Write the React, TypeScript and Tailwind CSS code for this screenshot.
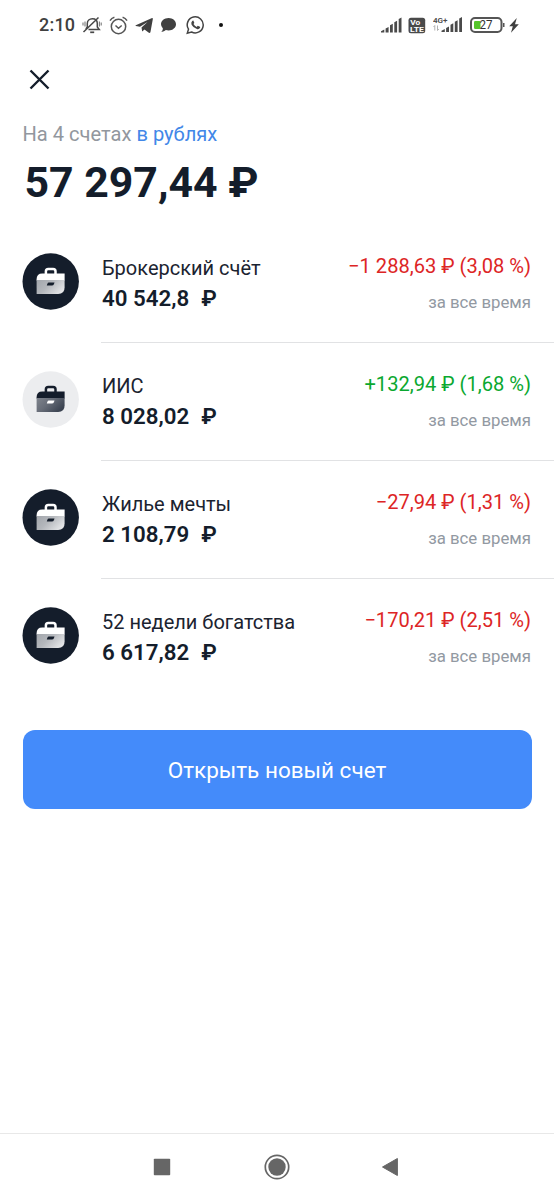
import React from "react";

type Account = {
  id: string;
  name: string;
  amount: string;
  change: string;
  positive?: boolean;
  light?: boolean;
};

const accounts: Account[] = [
  { id: "broker", name: "Брокерский счёт", amount: "40 542,8", change: "−1 288,63 ₽ (3,08 %)" },
  { id: "iis", name: "ИИС", amount: "8 028,02", change: "+132,94 ₽ (1,68 %)", positive: true, light: true },
  { id: "home", name: "Жилье мечты", amount: "2 108,79", change: "−27,94 ₽ (1,31 %)" },
  { id: "weeks", name: "52 недели богатства", amount: "6 617,82", change: "−170,21 ₽ (2,51 %)" },
];

function Briefcase({ id, light }: { id: string; light?: boolean }) {
  const top = light ? "#141d2b" : "#ffffff";
  return (
    <svg className="size-[57px] shrink-0" viewBox="0 0 57 57">
      <defs>
        <linearGradient id={id} x1="0" y1="0.1" x2="1" y2="0.6">
          <stop offset="0" stopColor={light ? "#7d828b" : "#a3a7ad"} />
          <stop offset="0.45" stopColor={light ? "#666c77" : "#b4b7bc"} />
          <stop offset="1" stopColor={light ? "#3a4250" : "#e3e4e6"} />
        </linearGradient>
      </defs>
      <circle cx="28.7" cy="28.5" r="28.2" fill={light ? "#ecedef" : "#141d2b"} />
      <path d="M23.9 21v-2.700q0-2.400 2.400-2.400h4.800q2.400 0 2.400 2.400V21" fill="none" stroke={top} strokeWidth="2.500" />
      <path d="M14.600 27.500v-1.300q0-5.700 5.700-5.700h22.300v7z" fill={top} />
      <path d="M14.600 27h28v7.400q0 6.500-6.500 6.500H14.600z" fill={`url(#${id})`} />
      <path d="M26.900 29.400h5.600l-.5 1.500q-.5 1.600-2.200 1.600h-5l.6-1.700q.4-1.400 1.500-1.400z" fill={light ? "#fff" : "#141d2b"} />
    </svg>
  );
}

function Signal() {
  return (
    <svg className="h-[17px] w-[22px]" viewBox="0 0 22 17" fill="#4a4a4a">
      <path d="M0 15.500v-1.200l3.300-1.800v3zM4.600 11.600l3-1.500v5.400h-3zM9 8.300l2.800-1.500v8.700H9zM13.300 5.300l2.800-1.500v11.700h-2.800zM17.700 2l2.800-1.500v15h-2.800z" />
    </svg>
  );
}

function StatusBar() {
  return (
    <header className="flex h-[50px] items-center pl-[39px] text-[#404040]">
      <span className="w-[43px] text-[18px] leading-[20px] font-medium tracking-[0.2px] whitespace-nowrap">2:10</span>
      <svg className="h-[18px] w-[20px]" viewBox="0 0 20 18" fill="none" stroke="#484848" strokeWidth="1.500">
        <path d="M6.500 13.600h10.800l-2-2.600V7.500c0-2.800-2-4.800-4.900-4.800S5.300 4.700 5.300 7.500V11L3.800 13M1.500 16 16.500 1.500" />
        <path d="M8.200 16.300h4" strokeWidth="1.700" />
        <path d="M3 5.600v4.800M1 6.600v2.800M17.400 5.600v4.800M19.200 6.600v2.800" strokeWidth="1.100" stroke="#777" />
      </svg>
      <svg className="ml-[7px] h-[19px] w-[20px]" viewBox="0 0 20 19" fill="none" stroke="#555" strokeWidth="1.500">
        <circle cx="9.500" cy="10.500" r="7.200" />
        <path d="m6.500 9.500 3 2.700 3.200-2.700M1 4.600Q2.500 2 5.400 1.200M13.600 1.200q2.900.8 4.400 3.400" />
      </svg>
      <svg className="ml-[6px] h-[17px] w-[19px]" viewBox="0 0 19 17" fill="#404040">
        <path d="M.800 8.200 16.500 1.200q1.600-.6 1.300 1.100L15.500 14.800q-.4 1.900-2 .8L9.500 12.400 7.200 14.600l-.7-4L12.500 5 5 9.800.900 9.100q-.9-.4-.1-.9z" />
      </svg>
      <svg className="ml-[6px] h-[16px] w-[17px]" viewBox="0 0 17 16" fill="#404040">
        <path d="M8.600 1C12.700 1 16 3.800 16 7.200s-3.300 6.200-7.400 6.200q-1.500 0-2.700-.4Q4.200 14.700 1.300 15q1.700-1.800 1.600-3.600Q1 9.600 1 7.200C1 3.800 4.400 1 8.600 1z" />
      </svg>
      <svg className="ml-[9px] h-[19px] w-[19px]" viewBox="0 0 19 19">
        <path d="m1.300 17.200 1.200-4A8 8 0 1 1 5.600 16z" fill="none" stroke="#444" strokeWidth="1.500" />
        <path d="M6.200 4.900q.6-.6 1.100-.4l1 2.300q0 .5-.8 1.200 1.200 2.100 3.200 2.900l1-1.100 2.300 1q.5.300-.1 1.300-1 1.500-3 .9Q7.300 12 5.600 8.700q-.9-2.200.6-3.800z" fill="#444" />
      </svg>
      <span className="ml-[14px] size-[4px] rounded-full bg-[#111]" />
      <div className="ml-auto flex items-center pr-[35px]">
        <Signal />
        <svg className="ml-[5px] h-[17px] w-[18px]" viewBox="0 0 18 17">
          <rect x=".5" y=".8" width="16.700" height="15.400" rx="2.500" fill="#4a4a4a" />
          <text x="2.300" y="7.600" fontSize="7" fontWeight="700" fill="#fff" textLength="10" lengthAdjust="spacingAndGlyphs">Vo</text>
          <text x="2" y="14.800" fontSize="7" fontWeight="700" fill="#fff" textLength="14" lengthAdjust="spacingAndGlyphs">LTE</text>
        </svg>
        <svg className="ml-[7px] h-[18px] w-[30px]" viewBox="0 0 30 18" fill="#4a4a4a">
          <text x="0" y="7" fontSize="8" fontWeight="600" textLength="14.500" lengthAdjust="spacingAndGlyphs">4G+</text>
          <path d="M1.800 14.500V9.500L.500 11M4.500 9.500v5L5.900 13" fill="none" stroke="#aaa" strokeWidth=".9" />
          <path d="M8.500 16v-1.200l3.300-1.800v3zM13.100 12.100l2.900-1.500V16h-2.900zM17.500 8.800l2.800-1.500V16h-2.800zM21.800 5.800l2.800-1.500V16h-2.800zM26.200 2.500 29 1v15h-2.800z" />
        </svg>
        <svg className="ml-[7px] h-[17px] w-[35px]" viewBox="0 0 35 17">
          <rect x="1" y="1" width="30.500" height="14" rx="4" fill="#fff" stroke="#555" strokeWidth="2" />
          <rect x="4" y="4" width="6.500" height="8" rx="1.200" fill="#55c52b" />
          <path d="M33 6h1.500v4H33z" fill="#555" />
          <text x="9.500" y="12.300" fontSize="12.500" fill="#333" textLength="13" lengthAdjust="spacingAndGlyphs">27</text>
        </svg>
        <svg className="ml-[4px] h-[15px] w-[10px]" viewBox="0 0 10 15" fill="#404040">
          <path d="M7.800 0 .2 8.200h3.600L2 14.800l7.800-8.500H6z" />
        </svg>
      </div>
    </header>
  );
}

function AccountRow({ account, divider }: { account: Account; divider: boolean }) {
  return (
    <li className="flex h-[118px] pl-[22px]">
      <div className="pt-[28px]">
        <Briefcase id={account.id} light={account.light} />
      </div>
      <div className={`ml-[22px] flex flex-1 justify-between border-b pt-[28px] pr-[23px] whitespace-nowrap ${divider ? "border-[#e1e2e4]" : "border-transparent"}`}>
        <div className="pl-px">
          <div className="text-[20px] leading-[30px] text-[#1b2330]">{account.name}</div>
          <div className="text-[22.300px] leading-[31px] font-semibold text-[#141d2b]">
            {account.amount}
            <span className="ml-[12px]">₽</span>
          </div>
        </div>
        <div className="text-right">
          <div className={`text-[20.100px] leading-[26px] ${account.positive ? "text-[#0aa82f]" : "text-[#dd2525]"}`}>{account.change}</div>
          <div className="mt-[8px] text-[16.800px] leading-[30px] text-[#9299a2]">за все время</div>
        </div>
      </div>
    </li>
  );
}

export default function App() {
  return (
    <div className="flex h-[1200px] w-[554px] flex-col overflow-hidden bg-white font-['Roboto',sans-serif]">
      <StatusBar />
      <main className="flex flex-1 flex-col">
        <button className="mt-[19px] ml-[29px] size-[21px]" aria-label="Закрыть">
          <svg viewBox="0 0 21 21" className="size-[21px]" stroke="#141d2b" strokeWidth="2.400">
            <path d="m1.500 1.500 18 18m0-18-18 18" />
          </svg>
        </button>
        <p className="mt-[29px] ml-[22.500px] text-[20.100px] leading-[30px] text-[#92979e]">
          На 4 счетах <span className="text-[#4287e8]">в рублях</span>
        </p>
        <h1 className="mt-[8px] ml-[24.500px] text-[42.800px] leading-[50px] font-bold whitespace-nowrap text-[#141d2b]">57 297,44 ₽</h1>
        <ul className="mt-[18px]">
          {accounts.map((account, i) => (
            <AccountRow key={account.id} account={account} divider={i < accounts.length - 1} />
          ))}
        </ul>
        <button className="mr-[22.500px] ml-[22.500px] mt-[33px] h-[79px] rounded-[12px] bg-[#448bfa] pt-[2px] text-[22.500px] text-white">
          Открыть новый счет
        </button>
      </main>
      <nav className="flex h-[67px] items-center border-t border-[#e8e8e8]">
        <svg className="ml-[153px] size-[18px]" viewBox="0 0 18 18">
          <rect x=".8" y=".8" width="16.400" height="16.400" rx=".8" fill="#666" />
        </svg>
        <svg className="ml-[93px] size-[26px]" viewBox="0 0 26 26">
          <circle cx="13" cy="13" r="11.700" fill="none" stroke="#666" strokeWidth="1.700" />
          <circle cx="13" cy="13" r="8.700" fill="#666" />
        </svg>
        <svg className="ml-[91px] h-[20px] w-[18px]" viewBox="0 0 18 20">
          <path d="M16.400 1.500v17L1.500 10z" fill="#666" stroke="#666" strokeWidth="1" strokeLinejoin="round" />
        </svg>
      </nav>
    </div>
  );
}
